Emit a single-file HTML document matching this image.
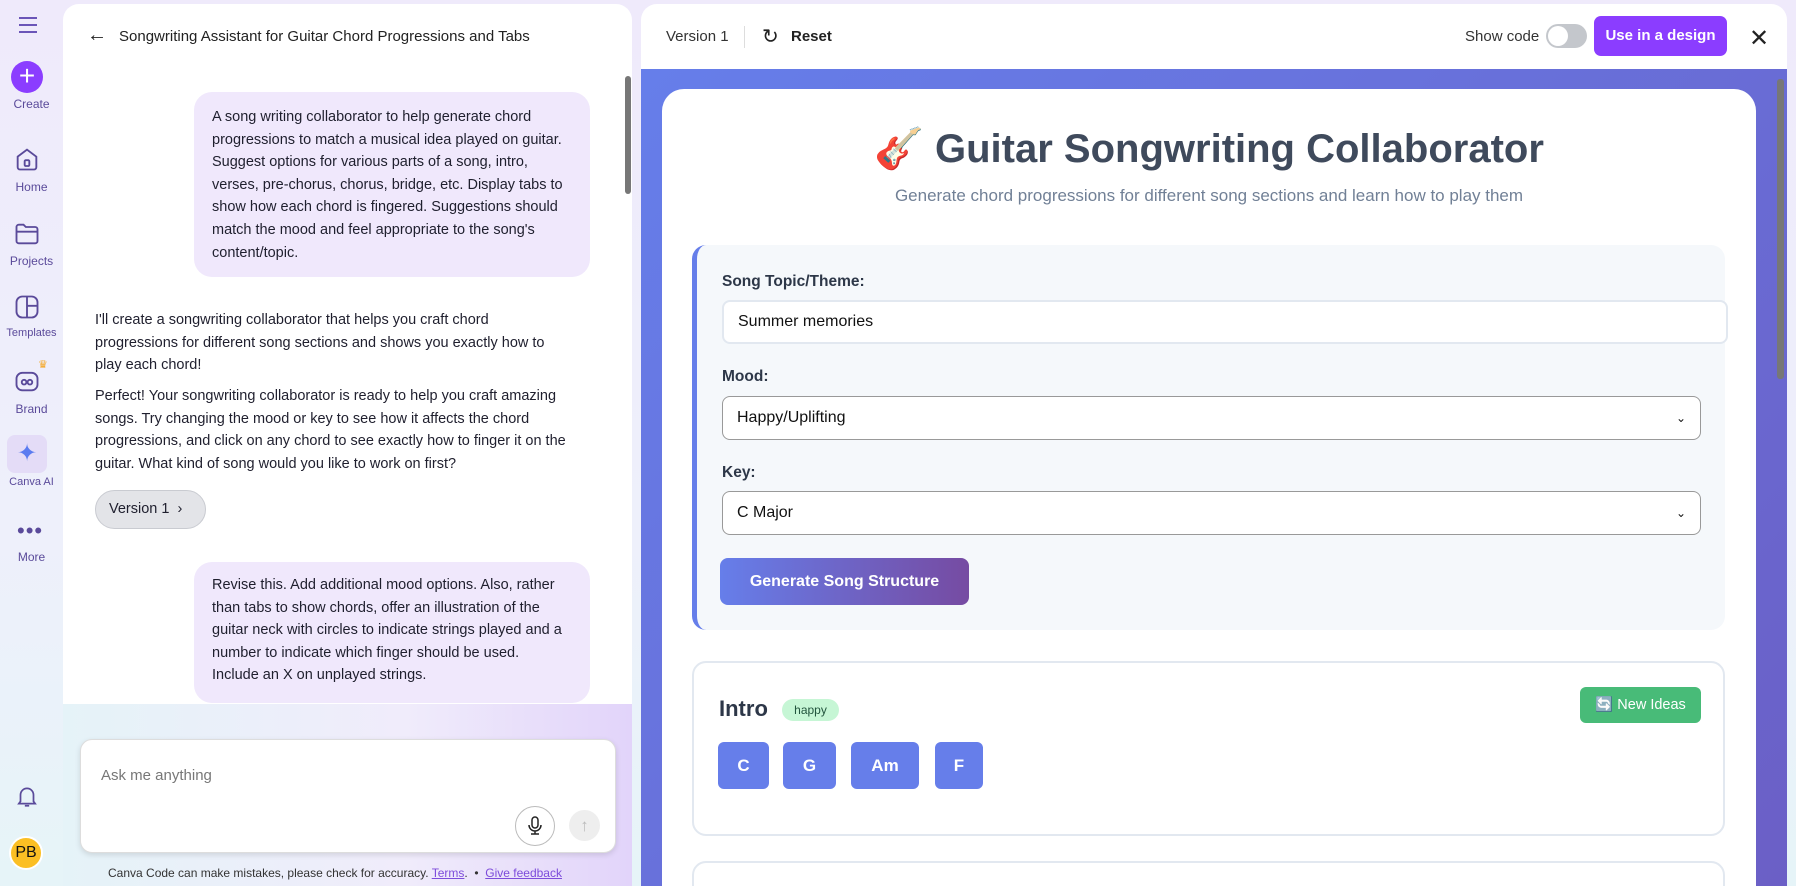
<!DOCTYPE html>
<html><head><meta charset="utf-8"><style>
*{box-sizing:border-box;margin:0;padding:0}
body{width:1796px;height:886px;overflow:hidden;font-family:"Liberation Sans",sans-serif;background:linear-gradient(180deg,#efeafb 0%,#eef0fb 60%,#e6f4f8 100%);position:relative;color:#1f1f2e}
.a{position:absolute}
.rl{position:absolute;left:0;width:63px;text-align:center;font-size:12px;color:#5a4a9a}
.chat{left:63px;top:4px;width:569px;height:882px;background:#fff;border-radius:16px 16px 0 0;overflow:hidden}
.bub{background:#f0e8fc;border-radius:18px;padding:14px 18px;font-size:14.5px;line-height:22.6px;color:#1f1f2e}
.right{left:641px;top:4px;width:1146px;height:882px;background:#fff;border-radius:16px 16px 0 0;overflow:hidden}
.grad{left:0;top:65px;width:1146px;height:817px;background:linear-gradient(135deg,#667eea,#6b5fc6);overflow:hidden}
.card{left:21px;top:20px;width:1094px;height:900px;background:#fff;border-radius:22px}
.lbl{font-size:15.5px;color:#2d3748;font-weight:600}
.inp{border:2px solid #e2e8f0;border-radius:8px;background:#fff;font-size:16px;padding:0 14px;display:flex;align-items:center;color:#111}
.chord{background:#667eea;color:#fff;font-weight:700;font-size:17px;border-radius:6px;display:flex;align-items:center;justify-content:center;height:47px}
</style></head><body>
<!-- rail -->
<div class="a" style="left:19px;top:17px;width:18px">
<div style="height:2px;background:#6b55b8;margin-bottom:5px"></div><div style="height:2px;background:#6b55b8;margin-bottom:5px"></div><div style="height:2px;background:#6b55b8"></div></div>
<div class="a" style="left:11px;top:61px;width:32px;height:32px;border-radius:50%;background:#8b3dff;color:#fff;font-size:28px;line-height:30px;text-align:center">+</div>
<div class="rl" style="top:97px">Create</div>
<svg class="a" style="left:13px;top:145px" width="28" height="28" viewBox="0 0 24 24" fill="none" stroke="#5a4a9a" stroke-width="1.6"><path d="M4 10l8-6 8 6v9a2 2 0 0 1-2 2H6a2 2 0 0 1-2-2z"/><rect x="10" y="13" width="4" height="5" rx="1"/></svg>
<div class="rl" style="top:180px">Home</div>
<svg class="a" style="left:13px;top:220px" width="28" height="28" viewBox="0 0 24 24" fill="none" stroke="#5a4a9a" stroke-width="1.6"><path d="M3 6a2 2 0 0 1 2-2h4l2 2h8a2 2 0 0 1 2 2v10a2 2 0 0 1-2 2H5a2 2 0 0 1-2-2z"/><path d="M3 10h18"/></svg>
<div class="rl" style="top:254px">Projects</div>
<svg class="a" style="left:13px;top:293px" width="28" height="28" viewBox="0 0 24 24" fill="none" stroke="#5a4a9a" stroke-width="1.6"><rect x="3" y="3" width="18" height="18" rx="5"/><path d="M12 3v18M12 11h9"/></svg>
<div class="rl" style="top:327px;font-size:11px">Templates</div>
<svg class="a" style="left:13px;top:367px" width="28" height="28" viewBox="0 0 24 24" fill="none" stroke="#5a4a9a" stroke-width="1.6"><rect x="3" y="5" width="18" height="15" rx="5"/><circle cx="9.5" cy="13" r="2"/><circle cx="14.5" cy="13" r="2"/></svg>
<div class="a" style="left:38px;top:358px;color:#f5a623;font-size:11px">♛</div>
<div class="rl" style="top:402px">Brand</div>
<div class="a" style="left:7px;top:435px;width:40px;height:38px;border-radius:8px;background:#e4dcf7;text-align:center;font-size:24px;line-height:38px;color:#5b7cf0">✦</div>
<div class="rl" style="top:476px;font-size:11px">Canva AI</div>
<div class="a" style="left:17px;top:518px;font-size:22px;color:#5a4a9a;letter-spacing:1px">•••</div>
<div class="rl" style="top:550px">More</div>
<svg class="a" style="left:14px;top:783px" width="26" height="26" viewBox="0 0 24 24" fill="none" stroke="#5a4a9a" stroke-width="1.6"><path d="M6 17V11a6 6 0 0 1 12 0v6l1.5 2h-15z"/><path d="M10 21h4"/></svg>
<div class="a" style="left:9px;top:836px;width:34px;height:34px;border-radius:50%;background:#fbbf24;border:2px solid #fff;font-size:16px;line-height:30px;text-align:center;color:#111">PB</div>

<!-- chat -->
<div class="a chat">
<div class="a" style="left:24px;top:20px;font-size:20px;color:#222">←</div>
<div class="a" style="left:56px;top:24px;font-size:15px;color:#222">Songwriting Assistant for Guitar Chord Progressions and Tabs</div>
<div class="a bub" style="left:131px;top:88px;width:396px;height:185px">A song writing collaborator to help generate chord progressions to match a musical idea played on guitar. Suggest options for various parts of a song, intro, verses, pre-chorus, chorus, bridge, etc. Display tabs to show how each chord is fingered. Suggestions should match the mood and feel appropriate to the song's content/topic.</div>
<div class="a" style="left:32px;top:305px;width:455px;font-size:14.5px;line-height:22.6px">I'll create a songwriting collaborator that helps you craft chord progressions for different song sections and shows you exactly how to play each chord!</div>
<div class="a" style="left:32px;top:381px;width:475px;font-size:14.5px;line-height:22.6px">Perfect! Your songwriting collaborator is ready to help you craft amazing songs. Try changing the mood or key to see how it affects the chord progressions, and click on any chord to see exactly how to finger it on the guitar. What kind of song would you like to work on first?</div>
<div class="a" style="left:32px;top:486px;width:111px;height:39px;border-radius:20px;background:#e3e4e8;border:1px solid #c9cbd1;font-size:14.5px;line-height:37px;padding-left:13px">Version 1 &nbsp;›</div>
<div class="a bub" style="left:131px;top:558px;width:396px;height:141px;padding:12px 24px 12px 18px">Revise this. Add additional mood options. Also, rather than tabs to show chords, offer an illustration of the guitar neck with circles to indicate strings played and a number to indicate which finger should be used. Include an X on unplayed strings.</div>
<div class="a" style="left:562px;top:72px;width:6px;height:118px;background:#777;border-radius:3px"></div>
<div class="a" style="left:0;top:700px;width:569px;height:182px;background:linear-gradient(90deg,#e5f3f8,#f0ecfb 60%,#e2d4fa)"></div>
<div class="a" style="left:17px;top:735px;width:536px;height:114px;background:#fff;border-radius:12px;box-shadow:0 2px 6px rgba(0,0,0,.12);border:1px solid #ddd"></div>
<div class="a" style="left:38px;top:763px;font-size:15px;color:#777">Ask me anything</div>
<div class="a" style="left:452px;top:802px;width:40px;height:40px;border-radius:50%;border:1px solid #bbb;background:#fff;text-align:center;padding-top:9px">
<svg width="16" height="20" viewBox="0 0 16 20" fill="none" stroke="#222" stroke-width="1.5"><rect x="5" y="1" width="6" height="11" rx="3"/><path d="M2 9a6 6 0 0 0 12 0M8 15v3M4 18h8"/></svg></div>
<div class="a" style="left:506px;top:806px;width:31px;height:31px;border-radius:50%;background:#eee;color:#bbb;text-align:center;line-height:31px;font-size:17px">↑</div>
<div class="a" style="left:45px;top:862px;font-size:12px;color:#333">Canva Code can make mistakes, please check for accuracy. <span style="color:#7d4cdb;text-decoration:underline">Terms</span>. &nbsp;• &nbsp;<span style="color:#7d4cdb;text-decoration:underline">Give feedback</span></div>
</div>

<!-- right -->
<div class="a right">
<div class="a" style="left:25px;top:24px;font-size:15px;color:#333">Version 1</div>
<div class="a" style="left:103px;top:22px;width:1px;height:22px;background:#ddd"></div>
<div class="a" style="left:121px;top:20px;font-size:20px;color:#222">↻</div>
<div class="a" style="left:150px;top:24px;font-size:15px;font-weight:700;color:#222">Reset</div>
<div class="a" style="left:824px;top:24px;font-size:15px;color:#333">Show code</div>
<div class="a" style="left:905px;top:20px;width:41px;height:24px;border-radius:12px;background:#c4c7cc"><div style="margin:2px;width:20px;height:20px;border-radius:50%;background:#fff"></div></div>
<div class="a" style="left:953px;top:12px;width:133px;height:40px;border-radius:7px;background:#8b3dff;color:#fff;font-weight:700;font-size:15px;line-height:40px;text-align:center">Use in a design</div>
<div class="a" style="left:1108px;top:20px;font-size:24px;color:#222">✕</div>
<div class="a grad">
<div class="a card">
<div class="a" style="left:0;top:36px;width:1094px;text-align:center;font-size:40px;font-weight:700;color:#3f4a5c">🎸 Guitar Songwriting Collaborator</div>
<div class="a" style="left:0;top:97px;width:1094px;text-align:center;font-size:17px;color:#718096">Generate chord progressions for different song sections and learn how to play them</div>
<div class="a" style="left:30px;top:156px;width:1033px;height:385px;background:#f5f8fb;border-radius:14px;border-left:5px solid #667eea">
<div class="a lbl" style="left:25px;top:28px">Song Topic/Theme:</div>
<div class="a inp" style="left:25px;top:55px;width:1006px;height:44px">Summer memories</div>
<div class="a lbl" style="left:25px;top:123px">Mood:</div>
<div class="a inp" style="left:25px;top:151px;width:979px;height:44px;border-width:1px;border-color:#999">Happy/Uplifting<span style="margin-left:auto;font-size:12px">⌄</span></div>
<div class="a lbl" style="left:25px;top:219px">Key:</div>
<div class="a inp" style="left:25px;top:246px;width:979px;height:44px;border-width:1px;border-color:#999">C Major<span style="margin-left:auto;font-size:12px">⌄</span></div>
<div class="a" style="left:23px;top:313px;width:249px;height:47px;border-radius:8px;background:linear-gradient(90deg,#667eea,#764ba2);color:#fff;font-weight:700;font-size:16px;line-height:47px;text-align:center">Generate Song Structure</div>
</div>
<div class="a" style="left:30px;top:572px;width:1033px;height:175px;border:2px solid #e2e8f0;border-radius:14px;background:#fff">
<div class="a" style="left:25px;top:33px;font-size:22px;font-weight:700;color:#2d3748">Intro</div>
<div class="a" style="left:88px;top:36px;width:57px;height:22px;border-radius:11px;background:#c6f6d5;color:#22543d;font-size:12px;line-height:22px;text-align:center">happy</div>
<div class="a" style="left:886px;top:24px;width:121px;height:36px;border-radius:6px;background:#48bb78;color:#fff;font-size:14.5px;line-height:36px;text-align:center">🔄 New Ideas</div>
<div class="a chord" style="left:24px;top:79px;width:51px">C</div>
<div class="a chord" style="left:89px;top:79px;width:53px">G</div>
<div class="a chord" style="left:157px;top:79px;width:68px">Am</div>
<div class="a chord" style="left:241px;top:79px;width:48px">F</div>
</div>
<div class="a" style="left:30px;top:772px;width:1033px;height:175px;border:2px solid #e2e8f0;border-radius:14px;background:#fff"></div>
</div>
<div class="a" style="left:1136px;top:10px;width:7px;height:300px;background:#777;border-radius:3px"></div>
</div>
</div>
</body></html>
